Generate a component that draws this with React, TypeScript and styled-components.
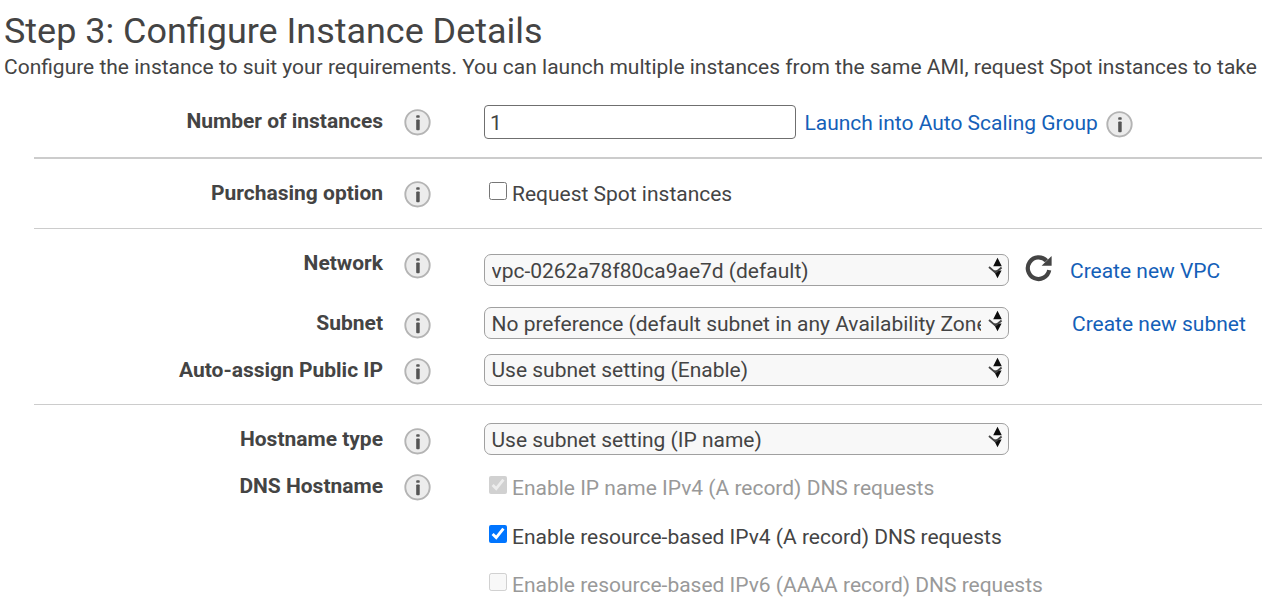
import React from 'react';
import styled, { createGlobalStyle } from 'styled-components';

const GlobalStyle = createGlobalStyle`
  * { box-sizing: border-box; }
  body {
    margin: 0;
    background: #fff;
    color: #444;
    font: 20.99px/24px Roboto, sans-serif;
    overflow: hidden;
  }
`;

const Page = styled.main`
  width: 1262px;
  height: 601px;
  overflow: hidden;
`;

const Header = styled.header`
  height: 85px;
  padding: 10px 0 0 4px;
  white-space: nowrap;
`;

const Title = styled.h1`
  margin: 0;
  font-size: 35.95px;
  font-weight: 400;
  line-height: 42px;
`;

const Subtitle = styled.p`
  margin: 3px 0 0;
`;

const Section = styled.section<{ $rule?: number }>`
  margin-left: 34px;
  border-bottom: ${(p) => p.$rule ?? 0}px solid #ccc;
`;

const Row = styled.div<{ $height: number }>`
  display: grid;
  grid-template-columns: 349px 101px 1fr;
  align-items: start;
  height: ${(p) => p.$height}px;
`;

const Label = styled.label<{ $top: number }>`
  padding-top: ${(p) => p.$top}px;
  font-weight: 700;
  text-align: right;
`;

const InfoCell = styled.div<{ $top: number }>`
  display: flex;
  padding: ${(p) => p.$top}px 0 0 21px;
`;

const Field = styled.div<{ $top: number }>`
  display: flex;
  align-items: flex-start;
  padding-top: ${(p) => p.$top}px;
  white-space: nowrap;
`;

const TextInput = styled.input`
  width: 312px;
  height: 34px;
  padding: 2px 5px 0;
  border: 1px solid #6f6f6f;
  border-radius: 4px;
  color: #444;
  font: inherit;
`;

const Link = styled.a<{ $left: number; $top: number }>`
  margin: ${(p) => p.$top}px 0 0 ${(p) => p.$left}px;
  color: #1460b8;
  text-decoration: none;
`;

const InlineIcon = styled.span`
  display: flex;
  margin: 6px 0 0 8px;
`;

const RefreshButton = styled.span`
  display: flex;
  margin-left: 16px;
`;

const SelectBox = styled.div`
  display: flex;
  width: 525px;
  height: 32px;
  padding: 0 5px 0 6.5px;
  border: 1px solid #a0a0a0;
  border-radius: 7px;
  background: #f8f8f8;
`;

const SelectText = styled.span<{ $top: number }>`
  width: 489.5px;
  height: 30px;
  padding-top: ${(p) => p.$top}px;
  overflow: hidden;
`;

const CheckList = styled.div`
  display: flex;
  flex-direction: column;
  gap: 24.5px;
`;

const CheckLine = styled.label<{ $muted?: boolean }>`
  display: flex;
  align-items: flex-start;
  height: 24px;
  padding-left: 5px;
  color: ${(p) => (p.$muted ? '#999' : '#444')};
`;

const Checkbox = styled.input`
  width: 18px;
  height: 18px;
  margin: 0 5px 0 0;
`;

const Info = () => (
  <svg width="27" height="27" viewBox="0 0 27 27">
    <circle cx="13.5" cy="13.3" r="12.2" fill="#ececec" stroke="#b4b4b4" strokeWidth="1.9" />
    <rect x="12.2" y="6.2" width="3.5" height="2.6" rx=".9" fill="#5a5a5a" />
    <rect x="12.2" y="10.4" width="3.5" height="10.8" rx=".9" fill="#555" />
  </svg>
);

const Refresh = () => (
  <svg width="28" height="28" viewBox="0 0 28 28">
    <path d="M24.2 16.2A10.8 10.8 0 1 1 21.5 6.8" fill="none" stroke="#444" strokeWidth="4.2" />
    <path d="M26.6 2v9.8H16.6z" fill="#444" />
  </svg>
);

const Arrows = () => (
  <svg width="22" height="30" viewBox="0 0 22 30">
    <path d="M16.5 2.8l4.3 8.4h-8.6zM12.6 15.4h8l-4.1 7.8z" fill="#0c0c0c" />
    <path d="M8 12l6.5 5.6L20.6 12.6" fill="none" stroke="#444" strokeWidth="1.9" />
  </svg>
);

const Select = ({ text, top = 4 }: { text: string; top?: number }) => (
  <SelectBox role="combobox">
    <SelectText $top={top}>{text}</SelectText>
    <Arrows />
  </SelectBox>
);

const App = () => (
  <>
    <GlobalStyle />
    <Page>
      <Header>
        <Title>Step 3: Configure Instance Details</Title>
        <Subtitle>
          Configure the instance to suit your requirements. You can launch multiple instances from the same AMI, request Spot instances to take
        </Subtitle>
      </Header>

      <Section $rule={2}>
        <Row $height={72}>
          <Label $top={24}>Number of instances</Label>
          <InfoCell $top={24}><Info /></InfoCell>
          <Field $top={20}>
            <TextInput defaultValue="1" />
            <Link $left={8.5} $top={6}>Launch into Auto Scaling Group</Link>
            <InlineIcon><Info /></InlineIcon>
          </Field>
        </Row>
      </Section>

      <Section $rule={1}>
        <Row $height={69}>
          <Label $top={22}>Purchasing option</Label>
          <InfoCell $top={22}><Info /></InfoCell>
          <Field $top={23}>
            <CheckLine><Checkbox type="checkbox" />Request Spot instances</CheckLine>
          </Field>
        </Row>
      </Section>

      <Section $rule={1}>
        <Row $height={60}>
          <Label $top={22}>Network</Label>
          <InfoCell $top={23}><Info /></InfoCell>
          <Field $top={25}>
            <Select text="vpc-0262a78f80ca9ae7d (default)" />
            <RefreshButton><Refresh /></RefreshButton>
            <Link $left={17} $top={5}>Create new VPC</Link>
          </Field>
        </Row>
        <Row $height={52}>
          <Label $top={22}>Subnet</Label>
          <InfoCell $top={23}><Info /></InfoCell>
          <Field $top={18}>
            <Select text="No preference (default subnet in any Availability Zone)" />
            <Link $left={63} $top={5}>Create new subnet</Link>
          </Field>
        </Row>
        <Row $height={63}>
          <Label $top={17}>Auto-assign Public IP</Label>
          <InfoCell $top={17}><Info /></InfoCell>
          <Field $top={13}>
            <Select text="Use subnet setting (Enable)" top={3} />
          </Field>
        </Row>
      </Section>

      <Section>
        <Row $height={55}>
          <Label $top={22}>Hostname type</Label>
          <InfoCell $top={23}><Info /></InfoCell>
          <Field $top={18}>
            <Select text="Use subnet setting (IP name)" />
          </Field>
        </Row>
        <Row $height={141}>
          <Label $top={14}>DNS Hostname</Label>
          <InfoCell $top={14}><Info /></InfoCell>
          <Field $top={16}>
            <CheckList>
              <CheckLine $muted><Checkbox type="checkbox" defaultChecked disabled />Enable IP name IPv4 (A record) DNS requests</CheckLine>
              <CheckLine><Checkbox type="checkbox" defaultChecked />Enable resource-based IPv4 (A record) DNS requests</CheckLine>
              <CheckLine $muted><Checkbox type="checkbox" disabled />Enable resource-based IPv6 (AAAA record) DNS requests</CheckLine>
            </CheckList>
          </Field>
        </Row>
      </Section>
    </Page>
  </>
);

export default App;
